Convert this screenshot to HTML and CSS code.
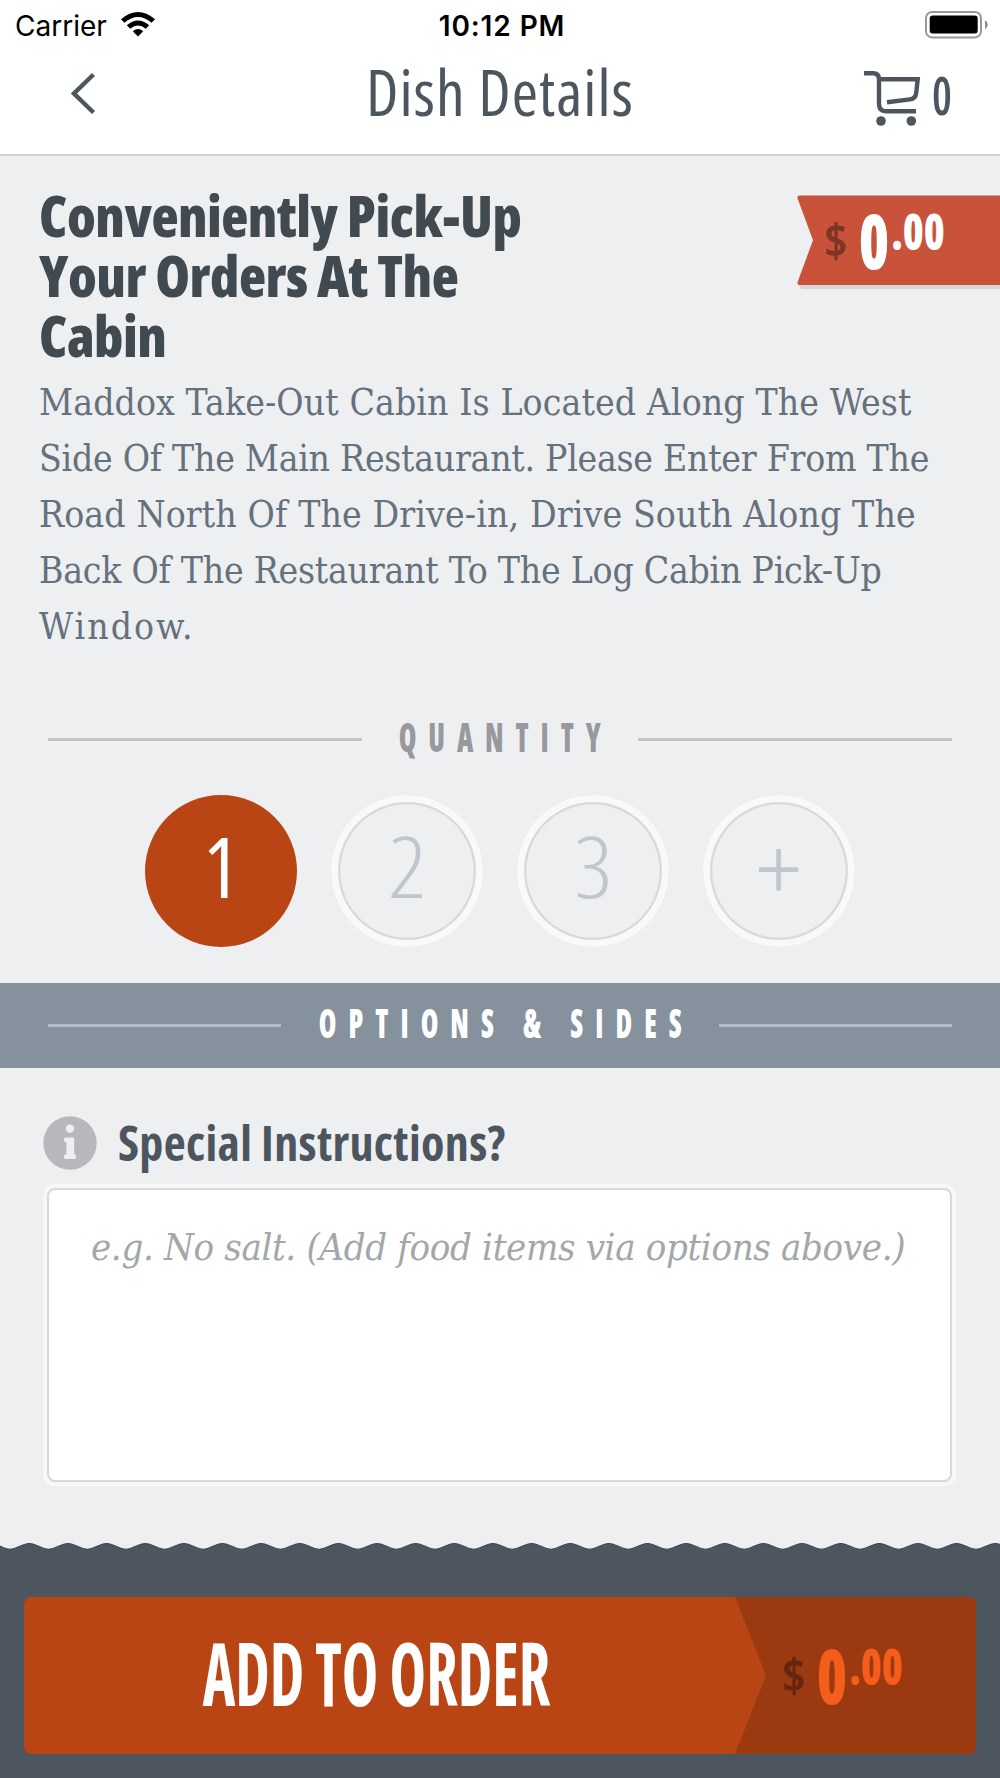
FILE: index.html
```
<!DOCTYPE html>
<html lang="en">
<head>
  <meta charset="UTF-8">
  <meta name="viewport" content="width=device-width, initial-scale=1.0">
  <title>Dish Details</title>
  <link rel="stylesheet" href="styles.css">
</head>
<body>
  <div class="status-bar">
    <div class="carrier">
      <span>Carrier</span>
      <svg width="34" height="25" viewBox="0 0 34 25">
        <path d="M0 7.3 Q17 -7.3 34 7.3 L30.6 10.8 Q17 -.8 3.4 10.8 Z"/>
        <path d="M5.8 13.2 Q17 3.6 28.2 13.2 L24.8 16.7 Q17 10.2 9.2 16.7 Z"/>
        <path d="M11.8 19.2 Q17 14.8 22.2 19.2 L17 24.4 Z"/>
      </svg>
    </div>
    <div class="time">10:12 PM</div>
    <div class="battery">
      <svg width="64" height="28" viewBox="0 0 64 28">
        <rect x="1" y="1" width="55" height="25.4" rx="6" fill="none" stroke="#989898" stroke-width="2"/>
        <rect x="4.7" y="4.6" width="48" height="18" rx="3" fill="#000"/>
        <path d="M60 9 Q62.8 11 62.8 13.6 Q62.8 16.4 60 18.4 Z" fill="#8c8c8c"/>
      </svg>
    </div>
  </div>

  <header class="nav">
    <div class="back">
      <svg width="26" height="44" viewBox="0 0 26 44">
        <path d="M22.5 2.5 L3 21.5 L22.5 40.5" fill="none" stroke="#4d565f" stroke-width="4.4"/>
      </svg>
    </div>
    <h1>Dish Details</h1>
    <div class="cart">
      <svg width="58" height="57" viewBox="0 0 58 57">
        <g fill="none" stroke="#4d565f" stroke-width="4.4">
          <path d="M0 3.3 H9 Q15 3.3 15 9.5 V34 Q15 41.2 22 41.2 H52"/>
          <path d="M15 9.2 H53.7 L52.2 23 Q51.6 28.6 46 29.4 L23 32.3"/>
        </g>
        <circle cx="17" cy="51" r="4.8" fill="#4d565f"/>
        <circle cx="47.3" cy="51" r="4.8" fill="#4d565f"/>
      </svg>
      <span class="count">0</span>
    </div>
  </header>

  <main>
    <section class="dish">
      <h2>Conveniently Pick-Up Your Orders At The Cabin</h2>
      <div class="ribbon">
        <svg class="ribbon-bg" width="203" height="98" viewBox="0 0 203 98">
          <path class="ribbon-shadow" d="M2 90 H203 V94 H4 Z"/>
          <path d="M2.5 .5 H203 V90 H2.5 Q-.3 90 .6 87 L16 45.2 L.6 3.5 Q-.3 .5 2.5 .5 Z" fill="#c9533a"/>
        </svg>
        <div class="price">
          <span class="currency">$</span>
          <span class="whole">0</span>
          <span class="cents">.00</span>
        </div>
      </div>
    </section>

    <p class="description">
      <span class="l1">Maddox Take-Out Cabin Is Located Along The West</span>
      <span class="l2">Side Of The Main Restaurant. Please Enter From The</span>
      <span class="l3">Road North Of The Drive-in, Drive South Along The</span>
      <span class="l4">Back Of The Restaurant To The Log Cabin Pick-Up</span>
      <span class="l5">Window.</span>
    </p>

    <div class="divider quantity-title"><span>QUANTITY</span></div>

    <div class="quantity">
      <button class="qty active"><span>1</span></button>
      <button class="qty"><span>2</span></button>
      <button class="qty"><span>3</span></button>
      <button class="qty">
        <svg width="40" height="42" viewBox="0 0 40 42">
          <path d="M0 20.6 H39.4 M19.6 0 V41.6" stroke="#bfc6cd" stroke-width="4.6"/>
        </svg>
      </button>
    </div>

    <div class="divider options-title"><span>OPTIONS &amp; SIDES</span></div>

    <section class="instructions">
      <label for="special">
        <svg width="54" height="54" viewBox="0 0 54 54">
          <circle cx="27" cy="27" r="26.7" fill="#b7b8bb"/>
          <circle cx="27" cy="12.6" r="4.2" fill="#eeeff1"/>
          <path d="M22.5 21.4 H30 Q31.2 21.4 31.2 22.6 V38.2 Q33 38.2 33 40 V41.4 Q33 42.9 31.5 42.9 H22.5 Q21 42.9 21 41.4 V40 Q21 38.2 23.4 38.2 V26.2 Q21 26.2 21 24.4 V22.9 Q21 21.4 22.5 21.4 Z" fill="#eeeff1"/>
        </svg>
        <span>Special Instructions?</span>
      </label>
      <textarea id="special" placeholder="e.g. No salt. (Add food items via options above.)"></textarea>
    </section>
  </main>

  <footer>
    <svg class="wave" width="1000" height="12">
      <defs>
        <pattern id="wave" x="9.98" width="38.64" height="12" patternUnits="userSpaceOnUse">
          <path d="M-1 7.2 H0 C8 7.2 11.5 1.4 19.32 1.4 C27.1 1.4 30.6 7.2 38.64 7.2 H40 V14 H-1 Z" fill="#4d555e" stroke="#3c454d"/>
        </pattern>
      </defs>
      <rect width="1000" height="12" fill="url(#wave)"/>
    </svg>
    <button class="add">
      <span class="add-label">ADD TO ORDER</span>
      <span class="add-price">
        <span class="price">
          <span class="currency">$</span>
          <span class="whole">0</span>
          <span class="cents">.00</span>
        </span>
      </span>
    </button>
  </footer>
</body>
</html>
```
FILE: styles.css
```
* {
  box-sizing: border-box;
}
body {
  margin: 0;
  width: 1000px;
  height: 1778px;
  overflow: hidden;
  display: flex;
  flex-direction: column;
  background-color: #eeeff1;
  color: #4d565f;
  font-family: "Open Sans", sans-serif;
  font-stretch: 75%;
}
h1, h2, p {
  margin: 0;
}
svg {
  display: block;
  flex: none;
}
button {
  border: none;
  padding: 0;
  background: none;
  font: inherit;
  font-stretch: 75%;
}

/* status bar */
.status-bar {
  height: 50px;
  display: flex;
  align-items: flex-start;
  padding: 11px 11px 0 15px;
  background-color: #fff;
  color: #000;
  font-family: Inter, sans-serif;
  font-stretch: 100%;
  font-size: 28px;
  line-height: 30px;
}
.carrier {
  flex: 1;
  display: flex;
  gap: 14px;
}
.carrier span {
  letter-spacing: 0;
}
.carrier svg {
  margin-top: 1px;
}
.time {
  font-weight: 600;
  letter-spacing: 0.9px;
}
.battery {
  flex: 1;
  display: flex;
  justify-content: flex-end;
}

/* navigation */
.nav {
  height: 106px;
  display: flex;
  align-items: flex-start;
  padding: 0 45px 0 71px;
  background-color: #fff;
  border-bottom: 2px solid #cfd0d2;
}
.back {
  width: 295px;
  padding-top: 22px;
}
.nav h1 {
  font-size: 63.5px;
  font-weight: 400;
  line-height: 84px;
  letter-spacing: 1px;
}
.cart {
  display: flex;
  gap: 8px;
  margin-left: auto;
}
.cart svg {
  margin-top: 20px;
}
.count {
  width: 25px;
  font-size: 53px;
  font-weight: 600;
  line-height: 89px;
  transform: scaleX(0.84);
}

/* dish */
.dish {
  display: flex;
  justify-content: space-between;
  padding: 29px 0 0 39px;
}
.dish h2 {
  width: 500px;
  color: #414951;
  font-size: 56px;
  font-weight: 800;
  line-height: 60.2px;
  letter-spacing: -0.5px;
}
.ribbon {
  position: relative;
  width: 203px;
  height: 98px;
  margin-top: 10px;
  padding-left: 28px;
}
.ribbon-bg {
  position: absolute;
  left: 0;
  top: 0;
}
.ribbon-shadow {
  fill: #d5d6d8;
}
.price {
  position: relative;
  display: flex;
  height: 90px;
  color: #fff;
  font-weight: 800;
}
.price span {
  display: flex;
  justify-content: center;
}
.price .currency {
  width: 22px;
  color: #7f3526;
  font-size: 47px;
  font-weight: 700;
  line-height: 89px;
  transform: scaleX(1.08);
}
.price .whole {
  width: 26px;
  margin-left: 14px;
  font-size: 77px;
  line-height: 89px;
  transform: scaleX(0.8);
}
.price .cents {
  width: 52px;
  margin-left: 5px;
  font-size: 50px;
  line-height: 72px;
  transform: scaleX(0.85);
}

.description {
  padding: 9px 40px 0 39px;
  color: #65717d;
  font-family: "DejaVu Serif Condensed", "DejaVu Serif", serif;
  font-size: 37px;
  line-height: 56px;
}
.description span {
  display: block;
  white-space: nowrap;
}
.l1 { letter-spacing: 0.1px; }
.l2 { letter-spacing: -0.27px; }
.l3 { letter-spacing: 0.12px; }
.l4 { letter-spacing: -0.25px; }
.l5 { letter-spacing: 2px; }

/* section dividers */
.divider {
  display: flex;
  align-items: center;
  padding: 0 48px;
  font-size: 40.6px;
  line-height: 50px;
}
.divider::before,
.divider::after {
  content: "";
  flex: none;
  height: 3px;
}
.divider span {
  flex: 1;
  min-width: 0;
  display: flex;
  justify-content: center;
  margin-top: -4px;
  white-space: nowrap;
  transform: scaleX(0.7);
}
.quantity-title {
  height: 50px;
  margin-top: 59.5px;
  color: #97999e;
  font-weight: 800;
}
.quantity-title::before,
.quantity-title::after {
  width: 314px;
  background-color: #c3c4c6;
}
.quantity-title span {
  padding-left: 16px;
  letter-spacing: 17px;
}
.options-title {
  height: 84.5px;
  margin-top: 36px;
  background-color: #85929d;
  color: #fff;
  font-weight: 800;
}
.options-title::before,
.options-title::after {
  width: 233px;
  background-color: #b6bdc5;
}
.options-title span {
  padding-left: 18px;
  letter-spacing: 17.2px;
}

/* quantity */
.quantity {
  display: flex;
  justify-content: center;
  gap: 34px;
  margin-top: 31px;
}
.qty {
  width: 152px;
  height: 152px;
  display: flex;
  align-items: center;
  justify-content: center;
  padding-bottom: 10px;
  border-radius: 50%;
  box-shadow: inset 0 0 0 7px #f9f9f9, inset 0 0 0 9.3px #d8d9da;
  color: #bfc6cd;
  font-size: 84px;
  font-weight: 340;
  line-height: 136px;
}
.qty span {
  transform: scaleX(1.12);
}
.qty svg {
  margin-top: 8px;
}
.qty.active {
  background-color: #b94515;
  box-shadow: none;
  color: #fff;
  font-weight: 500;
}
.qty.active span {
  transform: none;
}

/* special instructions */
.instructions {
  padding: 48px 43px 0;
}
.instructions label {
  display: flex;
  gap: 21px;
  height: 69px;
  color: #4d565f;
  font-size: 48px;
  font-weight: 700;
  line-height: 53px;
  letter-spacing: 0.35px;
}
.instructions textarea {
  display: block;
  width: 905px;
  height: 294px;
  margin: 3.5px 0 0 4px;
  padding: 31px 20px 0 42px;
  border: 2.3px solid #d7d8d9;
  border-radius: 8px;
  box-shadow: 0 0 0 4px #f8f8f9;
  background-color: #fff;
  font-family: "DejaVu Serif Condensed", "DejaVu Serif", serif;
  font-size: 38px;
  font-style: italic;
  letter-spacing: -0.35px;
  line-height: 52px;
  resize: none;
}
textarea::placeholder {
  color: #a3a7a9;
}

/* footer */
footer {
  margin-top: auto;
  height: 236px;
  background: linear-gradient(#4d555e, #4d555e) 0 11px no-repeat;
}
.add {
  width: 952px;
  height: 157px;
  margin: 43px 24px 0;
  display: flex;
  border-radius: 7px;
  background-color: #b94515;
  overflow: hidden;
}
.add-label {
  width: 705px;
  margin-right: 6px;
  display: flex;
  justify-content: center;
  color: #fff;
  font-size: 87px;
  font-weight: 700;
  line-height: 151px;
  white-space: nowrap;
  transform: scaleX(0.71);
}
.add-price {
  width: 241px;
  height: 157px;
  padding: 33px 0 0 48px;
  background-color: #9b3911;
  clip-path: polygon(0 0, 100% 0, 100% 100%, 0 100%, 31px 50%);
}
.add-price .price {
  color: #f45d1b;
}
.add-price .currency {
  color: #65260d;
}
```
